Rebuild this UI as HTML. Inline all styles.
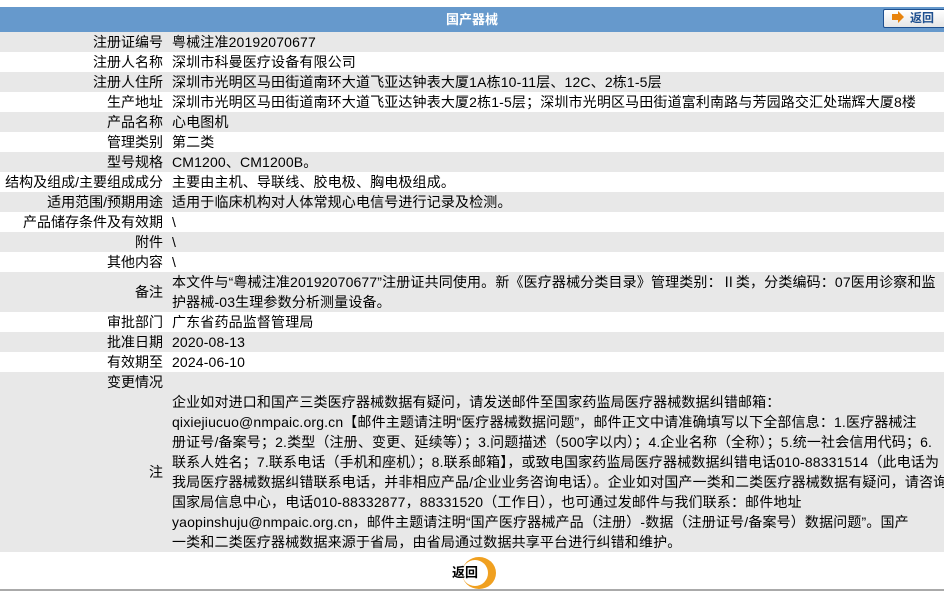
<!DOCTYPE html>
<html><head><meta charset="utf-8">
<style>
html,body{margin:0;padding:0;background:#fff;overflow:hidden;width:944px;height:591px;}
body{font-family:"Liberation Sans","Noto Sans CJK SC",sans-serif;font-size:14px;color:#000;position:relative;}
.hdr{position:absolute;left:0;top:7px;width:944px;height:25px;background:#6699cc;color:#fff;font-weight:bold;text-align:center;line-height:25px;font-size:13px;}
.back{position:absolute;left:883px;top:9px;width:70px;height:17px;border:1px solid #1d4f8f;border-radius:2px;background:linear-gradient(#fff,#e6e6e6);}
.back .ar{position:absolute;left:8px;top:4px;width:6px;height:6px;background:#e8830c;}
.back .ar:after{content:"";position:absolute;left:6px;top:-3px;border-left:6px solid #e8830c;border-top:6px solid transparent;border-bottom:6px solid transparent;}
.back span{position:absolute;left:26px;top:0;line-height:17px;font-size:12px;font-weight:bold;color:#1d4f8f;}
.row{position:absolute;left:0;width:944px;line-height:20px;white-space:nowrap;}
.g{background:#e8e8e8;}
.l{position:absolute;left:0;width:163px;text-align:right;}
.v{position:absolute;left:172px;letter-spacing:0.15px;}
.ring{position:absolute;left:462px;top:557px;width:34px;height:32px;border-radius:50%;background:#f0a020;}
.ring:after{content:"";position:absolute;left:0px;top:3px;width:26px;height:26px;border-radius:50%;background:#fff;}
.btxt{position:absolute;left:452px;top:562px;font-weight:bold;font-size:13px;z-index:2;}
.line{position:absolute;left:0;top:589px;width:944px;height:2px;background:#aaa;}
</style></head><body>
<div class="hdr">国产器械</div>
<div class="back"><div class="ar"></div><span>返回</span></div>

<div class="row g" style="top:32px;height:20px"><div class="l">注册证编号</div><div class="v">粤械注准20192070677</div></div>
<div class="row" style="top:52px;height:20px"><div class="l">注册人名称</div><div class="v">深圳市科曼医疗设备有限公司</div></div>
<div class="row g" style="top:72px;height:20px"><div class="l">注册人住所</div><div class="v">深圳市光明区马田街道南环大道飞亚达钟表大厦1A栋10-11层、12C、2栋1-5层</div></div>
<div class="row" style="top:92px;height:20px"><div class="l">生产地址</div><div class="v">深圳市光明区马田街道南环大道飞亚达钟表大厦2栋1-5层；深圳市光明区马田街道富利南路与芳园路交汇处瑞辉大厦8楼</div></div>
<div class="row g" style="top:112px;height:20px"><div class="l">产品名称</div><div class="v">心电图机</div></div>
<div class="row" style="top:132px;height:20px"><div class="l">管理类别</div><div class="v">第二类</div></div>
<div class="row g" style="top:152px;height:20px"><div class="l">型号规格</div><div class="v">CM1200、CM1200B。</div></div>
<div class="row" style="top:172px;height:20px"><div class="l">结构及组成/主要组成成分</div><div class="v">主要由主机、导联线、胶电极、胸电极组成。</div></div>
<div class="row g" style="top:192px;height:20px"><div class="l">适用范围/预期用途</div><div class="v">适用于临床机构对人体常规心电信号进行记录及检测。</div></div>
<div class="row" style="top:212px;height:20px"><div class="l">产品储存条件及有效期</div><div class="v">\</div></div>
<div class="row g" style="top:232px;height:20px"><div class="l">附件</div><div class="v">\</div></div>
<div class="row" style="top:252px;height:20px"><div class="l">其他内容</div><div class="v">\</div></div>
<div class="row g" style="top:272px;height:40px"><div class="l" style="top:10px">备注</div><div class="v">本文件与“粤械注准20192070677”注册证共同使用。新《医疗器械分类目录》管理类别：Ⅱ类，分类编码：07医用诊察和监<br>护器械-03生理参数分析测量设备。</div></div>
<div class="row" style="top:312px;height:20px"><div class="l">审批部门</div><div class="v">广东省药品监督管理局</div></div>
<div class="row g" style="top:332px;height:20px"><div class="l">批准日期</div><div class="v">2020-08-13</div></div>
<div class="row" style="top:352px;height:20px"><div class="l">有效期至</div><div class="v">2024-06-10</div></div>
<div class="row g" style="top:372px;height:20px"><div class="l">变更情况</div></div>
<div class="row g" style="top:392px;height:160px"><div class="l" style="top:70px">注</div><div class="v">企业如对进口和国产三类医疗器械数据有疑问，请发送邮件至国家药监局医疗器械数据纠错邮箱：<br>qixiejiucuo@nmpaic.org.cn【邮件主题请注明“医疗器械数据问题”，邮件正文中请准确填写以下全部信息：1.医疗器械注<br>册证号/备案号；2.类型（注册、变更、延续等）；3.问题描述（500字以内）；4.企业名称（全称）；5.统一社会信用代码；6.<br>联系人姓名；7.联系电话（手机和座机）；8.联系邮箱】，或致电国家药监局医疗器械数据纠错电话010-88331514（此电话为<br>我局医疗器械数据纠错联系电话，并非相应产品/企业业务咨询电话）。企业如对国产一类和二类医疗器械数据有疑问，请咨询<br>国家局信息中心，电话010-88332877，88331520（工作日），也可通过发邮件与我们联系：邮件地址<br>yaopinshuju@nmpaic.org.cn，邮件主题请注明“国产医疗器械产品（注册）-数据（注册证号/备案号）数据问题”。国产<br>一类和二类医疗器械数据来源于省局，由省局通过数据共享平台进行纠错和维护。</div></div>

<div class="ring"></div>
<div class="btxt">返回</div>
<div class="line"></div>
</body></html>
